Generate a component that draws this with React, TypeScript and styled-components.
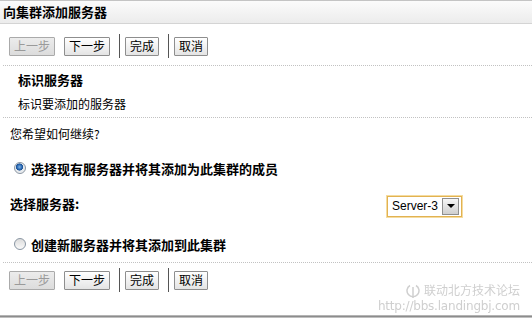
import styled, { createGlobalStyle } from "styled-components";

const GlobalStyle = createGlobalStyle`
  html, body {
    margin: 0;
    padding: 0;
    background: #ffffff;
  }
  body {
    font-family: "Noto Sans CJK SC", "DejaVu Sans", sans-serif;
    color: #000;
  }
`;

const Page = styled.div`
  position: relative;
  width: 532px;
  height: 322px;
  overflow: hidden;
  background: #fff;
`;

const TitleBar = styled.div`
  height: 22px;
  border-top: 1px solid #c4c4c4;
  border-bottom: 1px solid #d4d4d4;
  background: linear-gradient(#fbfbfb, #ececec);
  padding-left: 3px;
  font-size: 13px;
  font-weight: bold;
  line-height: 22px;
`;

const Toolbar = styled.div<{ $top: number; $bottom: number }>`
  display: flex;
  align-items: center;
  height: 24px;
  margin: ${(p) => p.$top}px 0 ${(p) => p.$bottom}px 9px;
`;

const Button = styled.button`
  height: 19px;
  padding: 0 4px;
  margin-right: 9px;
  border: 1px solid #8e8e8e;
  border-radius: 1px;
  background: linear-gradient(#ffffff, #e4e4e4);
  font-family: "Noto Sans CJK SC", sans-serif;
  font-size: 12px;
  line-height: 16px;
  color: #000;
  &:disabled {
    color: #9a9a9a;
    border-color: #aaaaaa;
    background: linear-gradient(#ececec, #dcdcdc);
  }
`;

const Separator = styled.span`
  width: 1px;
  height: 24px;
  background: #555;
  margin: 0 5px 0 0;
`;

const Dotted = styled.div<{ $top?: number }>`
  margin: ${(p) => p.$top ?? 0}px 0 0 3px;
  border-top: 1px dotted #c2c2c2;
`;

const Line = styled.div<{ $left: number; $top: number; $bold?: boolean }>`
  margin: ${(p) => p.$top}px 0 0 ${(p) => p.$left}px;
  font-size: ${(p) => (p.$bold ? 13 : 12)}px;
  font-weight: ${(p) => (p.$bold ? "bold" : "normal")};
  line-height: 18px;
  height: 18px;
`;

const RadioRow = styled.label<{ $top: number }>`
  display: flex;
  align-items: center;
  margin: ${(p) => p.$top}px 0 0 14px;
  height: 18px;
  font-size: 13px;
  font-weight: bold;
`;

const Radio = styled.span<{ $checked?: boolean }>`
  width: 10px;
  height: 10px;
  border-radius: 50%;
  border: 1px solid #8a96a3;
  margin-right: 5px;
  background: ${(p) =>
    p.$checked
      ? "radial-gradient(circle at 45% 40%, #7fb3e6 0, #2766b0 2.5px, #1a4f93 3.3px, #e4e8ec 3.8px, #f4f4f4 100%)"
      : "linear-gradient(#dcdcdc, #fafafa)"};
`;

const SelectRow = styled.div`
  display: flex;
  align-items: center;
  margin: 18px 0 0 10px;
  height: 22px;
`;

const SelectLabel = styled.span`
  width: 377px;
  font-size: 13px;
  font-weight: bold;
  line-height: 18px;
  margin-top: -4px;
`;

const Select = styled.div`
  display: flex;
  align-items: center;
  width: 73px;
  height: 19px;
  border: 1px solid #e2b251;
  box-shadow: 0 0 0 1px #f5dca0;
  background: #fff;
  font-family: "Liberation Sans", Arial, sans-serif;
  font-size: 12px;
  white-space: nowrap;
`;

const SelectValue = styled.span`
  flex: 1;
  padding-left: 4px;
  line-height: 19px;
  overflow: hidden;
`;

const SelectArrow = styled.span`
  flex: none;
  width: 15px;
  height: 15px;
  margin-right: 2px;
  border: 1px solid #8f8f8f;
  background: linear-gradient(#f6f6f6, #cfcfcf);
  display: flex;
  align-items: center;
  justify-content: center;
  &::after {
    content: "";
    border-left: 4px solid transparent;
    border-right: 4px solid transparent;
    border-top: 4px solid #000;
  }
`;

const BottomRule = styled.div`
  position: absolute;
  left: 0;
  right: 0;
  top: 315px;
  height: 3px;
  background: linear-gradient(#c8c8c8, #8c8c8c, #d8d8d8);
`;

const Watermark = styled.div`
  position: absolute;
  right: 12px;
  top: 282px;
  display: flex;
  flex-direction: column;
  align-items: flex-end;
  color: #cfcfcf;
  font-size: 12px;
  line-height: 16px;
  filter: blur(0.4px);
`;

const WatermarkBrand = styled.div`
  display: flex;
  align-items: center;
  gap: 4px;
`;

const WatermarkUrl = styled.div`
  font-family: "DejaVu Sans", sans-serif;
  font-size: 12px;
  letter-spacing: -0.2px;
`;

const StepButtons = ({ top, bottom }: { top: number; bottom: number }) => (
  <Toolbar $top={top} $bottom={bottom}>
    <Button disabled>上一步</Button>
    <Button>下一步</Button>
    <Separator />
    <Button>完成</Button>
    <Separator />
    <Button>取消</Button>
  </Toolbar>
);

export default function App() {
  return (
    <Page>
      <GlobalStyle />
      <TitleBar>向集群添加服务器</TitleBar>
      <StepButtons top={10} bottom={7} />
      <Dotted />
      <Line $left={18} $top={5} $bold>
        标识服务器
      </Line>
      <Line $left={18} $top={6}>
        标识要添加的服务器
      </Line>
      <Dotted $top={4} />
      <Line $left={10} $top={7}>
        您希望如何继续?
      </Line>
      <RadioRow $top={16}>
        <Radio $checked />
        选择现有服务器并将其添加为此集群的成员
      </RadioRow>
      <SelectRow>
        <SelectLabel>选择服务器:</SelectLabel>
        <Select>
          <SelectValue>Server-3</SelectValue>
          <SelectArrow />
        </Select>
      </SelectRow>
      <RadioRow $top={18}>
        <Radio />
        创建新服务器并将其添加到此集群
      </RadioRow>
      <Dotted $top={9} />
      <StepButtons top={5} bottom={0} />
      <Watermark>
        <WatermarkBrand>
          <svg width="14" height="15" viewBox="0 0 14 15">
            <path d="M4 2.5 A6 6 0 1 0 10 2.5" fill="none" stroke="#cfcfcf" strokeWidth="1.5" />
            <path d="M7 4 V15" stroke="#cfcfcf" strokeWidth="1.5" />
          </svg>
          联动北方技术论坛
        </WatermarkBrand>
        <WatermarkUrl>http://bbs.landingbj.com</WatermarkUrl>
      </Watermark>
      <BottomRule />
    </Page>
  );
}
